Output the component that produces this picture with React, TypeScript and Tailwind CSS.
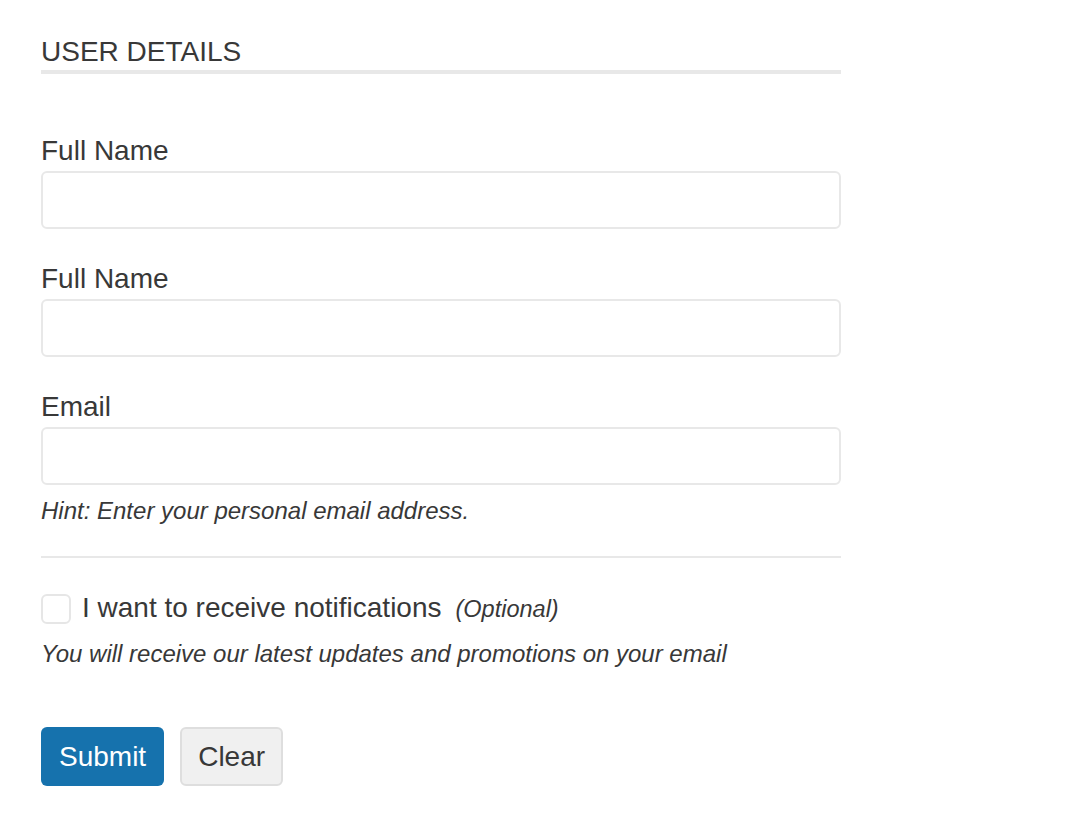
import { useState } from 'react';

function Field({ label, first, type = 'text' }: { label: string; first?: boolean; type?: string }) {
  return (
    <div className={first ? 'mt-[61px]' : 'mt-[34px]'}>
      <label className="block text-[28px] leading-[31px] text-[#383838]">{label}</label>
      <input
        type={type}
        className="mt-[5px] block h-[58px] w-full rounded-[6px] border-2 border-[#e8e8e8] bg-white px-3 text-[24px] text-[#383838] outline-none"
      />
    </div>
  );
}

export default function App() {
  const [checked, setChecked] = useState(false);

  return (
    <div className="min-h-screen bg-white" style={{ fontFamily: '"Liberation Sans", Arial, sans-serif' }}>
      <div className="w-[800px] ml-[41px] pt-[36px]">
        {/* Header */}
        <h2 className="border-b-4 border-[#e8e8e8] pb-[3px] text-[28px] leading-[31px] font-normal text-[#383838]">
          USER DETAILS
        </h2>

        <Field label="Full Name" first />
        <Field label="Full Name" />
        <Field label="Email" type="email" />
        <p className="mt-[12px] text-[24px] leading-[28px] italic text-[#383838]">
          Hint: Enter your personal email address.
        </p>

        <div className="mt-[31px] h-[2px] bg-[#e8e8e8]" />

        {/* Notifications */}
        <label className="mt-[34px] flex items-center gap-[11px] cursor-pointer">
          <span
            onClick={() => setChecked(!checked)}
            className="h-[30px] w-[30px] shrink-0 rounded-[6px] border-2 border-[#e6e6e6] bg-white"
          />
          <span className="flex items-baseline text-[28px] leading-[31px] text-[#383838]">
            I want to receive notifications
            <span className="ml-[14px] text-[23.5px] italic">(Optional)</span>
          </span>
        </label>
        <p className="mt-[15px] text-[24px] leading-[28px] italic text-[#383838]">
          You will receive our latest updates and promotions on your email
        </p>

        {/* Actions */}
        <div className="mt-[59px] flex gap-[16px]">
          <button className="h-[59px] rounded-[6px] bg-[#1672ad] px-[18px] text-[28px] text-white">
            Submit
          </button>
          <button className="h-[59px] rounded-[6px] border-2 border-[#dedede] bg-[#f0f0f0] px-[16px] text-[28px] text-[#383838]">
            Clear
          </button>
        </div>
      </div>
    </div>
  );
}
